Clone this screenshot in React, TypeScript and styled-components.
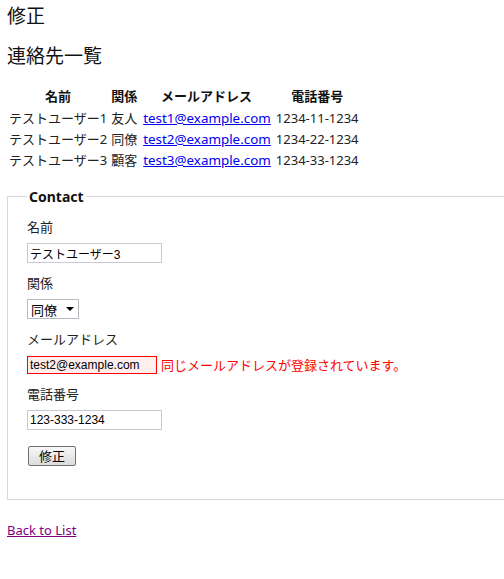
import styled, { createGlobalStyle } from 'styled-components'

const GlobalStyle = createGlobalStyle`
  html, body {
    margin: 0;
    padding: 0;
    background: #fff;
  }
  body {
    padding: 0 7px;
    font-family: 'Noto Sans', 'Noto Sans CJK JP', sans-serif;
    color: #222;
  }
`

const Title = styled.h2`
  font-family: 'Noto Sans CJK JP', sans-serif;
  font-weight: 400;
  font-size: 19px;
  line-height: 22px;
  margin: 4px 0 18px;
  color: #111;
`

const ListTable = styled.table`
  border-collapse: separate;
  border-spacing: 2px 0;
  margin: 0 0 17px -1px;
  font-size: 13px;
`

const Th = styled.th`
  font-weight: 700;
  height: 23px;
  padding: 0 1px;
  text-align: center;
  color: #111;
`

const Td = styled.td`
  height: 21px;
  padding: 0 1px;
  color: #222;
  white-space: nowrap;
`

const Mail = styled.a`
  color: #0000ee;
  font-size: 13.4px;
  padding: 0 1px 0 2px;
`

const Fieldset = styled.fieldset`
  border: 1px solid #d8d8d8;
  border-right: none;
  margin: 0 -7px 0 0;
  padding: 5px 19px 33px;
`

const Legend = styled.legend`
  font-weight: 700;
  font-size: 14px;
  padding: 0 2px;
  color: #111;
`

const Field = styled.div`
  display: flex;
  flex-direction: column;
  align-items: flex-start;
  margin-bottom: 4px;
`

const Label = styled.label`
  font-family: 'Noto Sans CJK JP', sans-serif;
  font-size: 13px;
  line-height: 20px;
  margin: 6px 0 6px;
  color: #222;
`

const Row = styled.div`
  display: flex;
  align-items: center;
`

const Input = styled.input<{ $error?: boolean }>`
  box-sizing: border-box;
  width: ${p => (p.$error ? '130px' : '135px')};
  height: ${p => (p.$error ? '18px' : '20px')};
  border: 1px solid ${p => (p.$error ? '#ff0000' : '#c8c8d0')};
  background: ${p => (p.$error ? '#ffeeee' : '#fff')};
  font-family: 'Liberation Sans', 'Noto Sans CJK JP', sans-serif;
  font-size: 12px;
  padding: 0 2px;
  color: #000;
  outline: none;
`

const ErrorText = styled.span`
  color: #ff0000;
  font-family: 'Noto Sans CJK JP', sans-serif;
  font-size: 13px;
  margin-left: 4px;
`

const SelectBox = styled.div`
  display: flex;
  align-items: center;
  justify-content: space-between;
  box-sizing: border-box;
  width: 52px;
  height: 20px;
  border: 1px solid #b8b8c0;
  padding: 0 4px 0 3px;
  font-family: 'Noto Sans CJK JP', sans-serif;
  font-size: 13px;
  color: #000;
`

const Caret = styled.span`
  width: 0;
  height: 0;
  border-left: 4px solid transparent;
  border-right: 4px solid transparent;
  border-top: 4px solid #000;
`

const Button = styled.button`
  margin: 12px 0 0 1px;
  width: 48px;
  height: 20px;
  border: 1px solid #707070;
  border-radius: 2px;
  background: linear-gradient(#f8f8f8, #dcdcdc);
  font-family: 'Noto Sans CJK JP', sans-serif;
  font-size: 13px;
  line-height: 16px;
  padding: 0;
  color: #000;
`

const BackLink = styled.a`
  display: inline-block;
  margin-top: 21px;
  color: #800080;
  font-size: 13px;
`

const contacts = [
  { name: 'テストユーザー1', rel: '友人', mail: 'test1@example.com', tel: '1234-11-1234' },
  { name: 'テストユーザー2', rel: '同僚', mail: 'test2@example.com', tel: '1234-22-1234' },
  { name: 'テストユーザー3', rel: '顧客', mail: 'test3@example.com', tel: '1234-33-1234' },
]

export default function App() {
  return (
    <>
      <GlobalStyle />
      <Title>修正</Title>
      <Title>連絡先一覧</Title>
      <ListTable>
        <thead>
          <tr>
            <Th>名前</Th>
            <Th>関係</Th>
            <Th>メールアドレス</Th>
            <Th>電話番号</Th>
          </tr>
        </thead>
        <tbody>
          {contacts.map(c => (
            <tr key={c.mail}>
              <Td>{c.name}</Td>
              <Td>{c.rel}</Td>
              <Td>
                <Mail href="#">{c.mail}</Mail>
              </Td>
              <Td>{c.tel}</Td>
            </tr>
          ))}
        </tbody>
      </ListTable>
      <Fieldset>
        <Legend>Contact</Legend>
        <Field>
          <Label>名前</Label>
          <Input defaultValue="テストユーザー3" />
        </Field>
        <Field>
          <Label>関係</Label>
          <SelectBox>
            同僚 <Caret />
          </SelectBox>
        </Field>
        <Field>
          <Label>メールアドレス</Label>
          <Row>
            <Input $error defaultValue="test2@example.com" />
            <ErrorText>同じメールアドレスが登録されています。</ErrorText>
          </Row>
        </Field>
        <Field>
          <Label>電話番号</Label>
          <Input defaultValue="123-333-1234" />
        </Field>
        <Button>修正</Button>
      </Fieldset>
      <BackLink href="#">Back to List</BackLink>
    </>
  )
}
